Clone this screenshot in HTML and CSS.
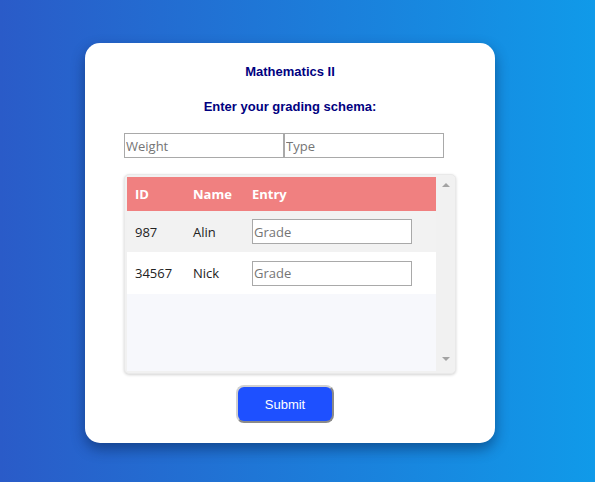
FILE: index.html
```html
<!DOCTYPE html>
<html>
<head>
<meta charset="utf-8">
<link rel="stylesheet" href="styles.css">
</head>
<body>
<div class="card">
  <div class="title">Mathematics II</div>
  <div class="subtitle">Enter your grading schema:</div>
  <div class="schema">
    <input class="field" type="text" placeholder="Weight"><input class="field" type="text" placeholder="Type">
  </div>
  <div class="table-box">
    <div class="table-area">
      <div class="row head">
        <div class="c-id">ID</div><div class="c-name">Name</div><div class="c-entry">Entry</div>
      </div>
      <div class="row odd">
        <div class="c-id">987</div><div class="c-name">Alin</div><div class="c-entry"><input class="field" type="text" placeholder="Grade"></div>
      </div>
      <div class="row even">
        <div class="c-id">34567</div><div class="c-name">Nick</div><div class="c-entry"><input class="field" type="text" placeholder="Grade"></div>
      </div>
    </div>
    <div class="scrollbar">
      <span class="arrow up"></span>
      <span class="arrow down"></span>
    </div>
  </div>
  <div class="actions">
    <button class="submit" type="button">Submit</button>
  </div>
</div>
</body>
</html>
```
FILE: styles.css
```css
html, body {
  margin: 0;
  padding: 0;
}
body {
  width: 595px;
  height: 482px;
  overflow: hidden;
  background: linear-gradient(to right, #2a5bc8, #109ae9);
  font-family: "Liberation Sans", Arial, sans-serif;
}
.card {
  box-sizing: border-box;
  width: 410px;
  height: 400px;
  margin: 43px 0 0 85px;
  padding: 0 39px;
  background: #fff;
  border-radius: 15px;
  box-shadow: 0 6px 14px rgba(0, 20, 60, 0.45);
  display: flex;
  flex-direction: column;
  overflow: hidden;
}
.title {
  margin-top: 21px;
  line-height: 16px;
  font-size: 13px;
  font-weight: bold;
  color: #000080;
  text-align: center;
  width: 332px;
}
.subtitle {
  margin-top: 19px;
  line-height: 16px;
  font-size: 13px;
  font-weight: bold;
  color: #000080;
  text-align: center;
  width: 332px;
}
.schema {
  margin-top: 18px;
  display: flex;
  height: 25px;
}
.field {
  box-sizing: border-box;
  width: 160px;
  height: 25px;
  margin: 0;
  padding: 0 1px;
  border: 1px solid #a9a9a9;
  background: #fff;
  font-family: "Open Sans", sans-serif;
  font-size: 13px;
  color: #333;
  outline: none;
}
.field::placeholder {
  color: #757575;
}
.table-box {
  box-sizing: border-box;
  margin-top: 16px;
  width: 332px;
  height: 200px;
  display: flex;
  padding: 2px 0 2px 2px;
  border: 1px solid #e9e9e9;
  border-radius: 5px;
  background: #f1f1f1;
  box-shadow: 0 1px 3px rgba(0, 0, 0, 0.18);
}
.table-area {
  width: 309px;
  background: #f7f8fc;
  font-family: "Open Sans", sans-serif;
  font-size: 13px;
  color: #222;
}
.row {
  display: flex;
  align-items: center;
}
.row.head {
  height: 34px;
  background: #f08080;
  color: #fff;
  font-weight: bold;
}
.row.odd {
  height: 41px;
  background: #f2f2f2;
}
.row.even {
  height: 42px;
  background: #fff;
}
.c-id {
  width: 66px;
  padding-left: 8px;
  box-sizing: border-box;
}
.c-name {
  width: 59px;
}
.c-entry {
  flex: 1;
  display: flex;
}
.scrollbar {
  flex: 1;
  background: #f1f1f1;
  display: flex;
  flex-direction: column;
  justify-content: space-between;
  align-items: center;
  padding: 6px 0 10px;
}
.arrow {
  width: 0;
  height: 0;
  border-left: 4px solid transparent;
  border-right: 4px solid transparent;
}
.arrow.up {
  border-bottom: 4px solid #a3a3a3;
}
.arrow.down {
  border-top: 4px solid #a3a3a3;
}
.actions {
  margin-top: 11px;
  padding-left: 112px;
}
.submit {
  box-sizing: border-box;
  width: 98px;
  height: 38px;
  background: #1e50ff;
  color: #fff;
  font-family: "Liberation Sans", Arial, sans-serif;
  font-size: 13px;
  border: 2px solid;
  border-color: #d0d0d0 #8a8a8a #8a8a8a #d0d0d0;
  border-radius: 8px;
  padding: 0;
}
```
